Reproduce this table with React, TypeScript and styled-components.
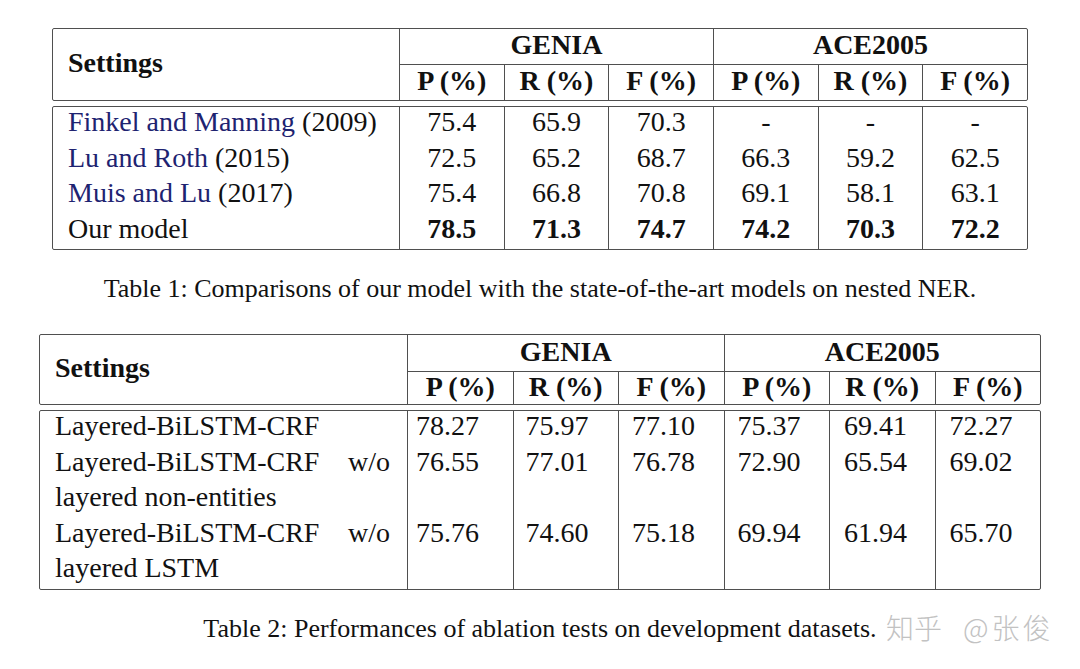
import React from 'react';
import styled, { createGlobalStyle } from 'styled-components';

const GlobalStyle = createGlobalStyle`
  html, body {
    margin: 0;
    padding: 0;
    background: #ffffff;
  }
  body {
    font-family: "Liberation Serif", "Times New Roman", serif;
    color: #111111;
  }
`;

const line = '#4f4f4f';

const Page = styled.div`
  position: relative;
  width: 1080px;
  height: 669px;
  box-sizing: border-box;
  padding-top: 28px;
  display: flex;
  flex-direction: column;
  align-items: center;
  overflow: hidden;
`;

const TableBlock = styled.div<{ $width: number; $top?: number }>`
  width: ${p => p.$width}px;
  margin-top: ${p => p.$top ?? 0}px;
  display: flex;
  flex-direction: column;
  gap: 5px;
`;

const HeadBox = styled.div<{ $cols: string; $rows: string }>`
  display: grid;
  grid-template-columns: ${p => p.$cols};
  grid-template-rows: ${p => p.$rows};
  border: 1px solid ${line};
  border-radius: 2px;
  font-size: 28px;
  font-weight: bold;
`;

// each text row is 30px of line box plus padding, so glyphs sit a little high as in the print
const BodyBox = styled.div<{ $cols: string; $pitch: number }>`
  --row-pad: ${p => p.$pitch - 30}px;
  display: grid;
  grid-template-columns: ${p => p.$cols};
  border: 1px solid ${line};
  border-radius: 2px;
  font-size: 28px;
  line-height: 30px;
`;

const SettingsHead = styled.div<{ $pad: number }>`
  grid-column: 1;
  grid-row: 1 / span 2;
  display: flex;
  align-items: center;
  padding: 0 0 4px ${p => p.$pad}px;
`;

const GroupHead = styled.div`
  grid-column: span 3;
  border-left: 1px solid ${line};
  display: flex;
  align-items: center;
  justify-content: center;
  padding-bottom: 3px;
`;

const SubHead = styled.div`
  border-left: 1px solid ${line};
  border-top: 1px solid ${line};
  display: flex;
  align-items: center;
  justify-content: center;
  padding-bottom: 3px;
`;

const NameCell = styled.div<{ $pad: number; $padRight: number }>`
  padding: 0 ${p => p.$padRight}px 0 ${p => p.$pad}px;
`;

const Line = styled.div<{ $justify?: boolean }>`
  padding-bottom: var(--row-pad);
  white-space: nowrap;
  text-align: ${p => (p.$justify ? 'justify' : 'left')};
  text-align-last: ${p => (p.$justify ? 'justify' : 'auto')};
`;

const Cite = styled.span`
  color: #1e2371;
`;

const NumCell = styled.div<{ $align: 'center' | 'left'; $indent?: number; $bold?: boolean }>`
  border-left: 1px solid ${line};
  padding-bottom: var(--row-pad);
  text-align: ${p => p.$align};
  padding-left: ${p => p.$indent ?? 0}px;
  font-weight: ${p => (p.$bold ? 'bold' : 'normal')};
`;

const Caption = styled.p`
  margin: 24px 0 0;
  font-size: 26px;
  line-height: 30px;
  white-space: nowrap;
`;

const Watermark = styled.div`
  position: absolute;
  left: 886px;
  top: 610px;
  display: flex;
  gap: 21px;
  font-family: "Noto Sans CJK SC", "Noto Sans", sans-serif;
  font-weight: 300;
  font-size: 28px;
  line-height: 34px;
  color: #c2c2c2;
`;

const Handle = styled.span`
  letter-spacing: 3px;
`;

type Row1 = { cite?: string; year?: string; name?: string; vals: string[]; bold?: boolean };

const table1: Row1[] = [
  { cite: 'Finkel and Manning', year: '(2009)', vals: ['75.4', '65.9', '70.3', '-', '-', '-'] },
  { cite: 'Lu and Roth', year: '(2015)', vals: ['72.5', '65.2', '68.7', '66.3', '59.2', '62.5'] },
  { cite: 'Muis and Lu', year: '(2017)', vals: ['75.4', '66.8', '70.8', '69.1', '58.1', '63.1'] },
  { name: 'Our model', vals: ['78.5', '71.3', '74.7', '74.2', '70.3', '72.2'], bold: true },
];

const table2 = [
  { lines: ['Layered-BiLSTM-CRF'], vals: ['78.27', '75.97', '77.10', '75.37', '69.41', '72.27'] },
  {
    lines: ['Layered-BiLSTM-CRF w/o', 'layered non-entities'],
    vals: ['76.55', '77.01', '76.78', '72.90', '65.54', '69.02'],
  },
  {
    lines: ['Layered-BiLSTM-CRF w/o', 'layered LSTM'],
    vals: ['75.76', '74.60', '75.18', '69.94', '61.94', '65.70'],
  },
];

const subHeads = ['P (%)', 'R (%)', 'F (%)', 'P (%)', 'R (%)', 'F (%)'];
const indents2 = [8, 12, 13, 13, 14, 14];

const TableHead: React.FC<{ cols: string; rows: string; pad: number }> = ({ cols, rows, pad }) => (
  <HeadBox $cols={cols} $rows={rows}>
    <SettingsHead $pad={pad}>Settings</SettingsHead>
    <GroupHead>GENIA</GroupHead>
    <GroupHead>ACE2005</GroupHead>
    {subHeads.map((h, i) => (
      <SubHead key={i}>{h}</SubHead>
    ))}
  </HeadBox>
);

export default function App() {
  const cols1 = '346px repeat(6, 1fr)';
  const cols2 = '367px repeat(6, 1fr)';

  return (
    <>
      <GlobalStyle />
      <Page>
        <TableBlock $width={976}>
          <TableHead cols={cols1} rows="35px 36px" pad={15} />
          <BodyBox $cols={cols1} $pitch={35.5}>
            {table1.map((r, i) => (
              <React.Fragment key={i}>
                <NameCell $pad={15} $padRight={10}>
                  <Line>
                    {r.cite ? (
                      <>
                        <Cite>{r.cite}</Cite> {r.year}
                      </>
                    ) : (
                      r.name
                    )}
                  </Line>
                </NameCell>
                {r.vals.map((v, j) => (
                  <NumCell key={j} $align="center" $bold={r.bold}>
                    {v}
                  </NumCell>
                ))}
              </React.Fragment>
            ))}
          </BodyBox>
        </TableBlock>

        <Caption>Table 1: Comparisons of our model with the state-of-the-art models on nested NER.</Caption>

        <TableBlock $width={1002} $top={30}>
          <TableHead cols={cols2} rows="36px 33px" pad={15} />
          <BodyBox $cols={cols2} $pitch={35.6}>
            {table2.map((r, i) => (
              <React.Fragment key={i}>
                <NameCell $pad={15} $padRight={17}>
                  {r.lines.map((t, k) => (
                    <Line key={k} $justify={r.lines.length > 1 && k === 0}>
                      {t}
                    </Line>
                  ))}
                </NameCell>
                {r.vals.map((v, j) => (
                  <NumCell key={j} $align="left" $indent={indents2[j]}>
                    {v}
                  </NumCell>
                ))}
              </React.Fragment>
            ))}
          </BodyBox>
        </TableBlock>

        <Caption>Table 2: Performances of ablation tests on development datasets.</Caption>

        <Watermark>
          <span>知乎</span>
          <Handle>@张俊</Handle>
        </Watermark>
      </Page>
    </>
  );
}
